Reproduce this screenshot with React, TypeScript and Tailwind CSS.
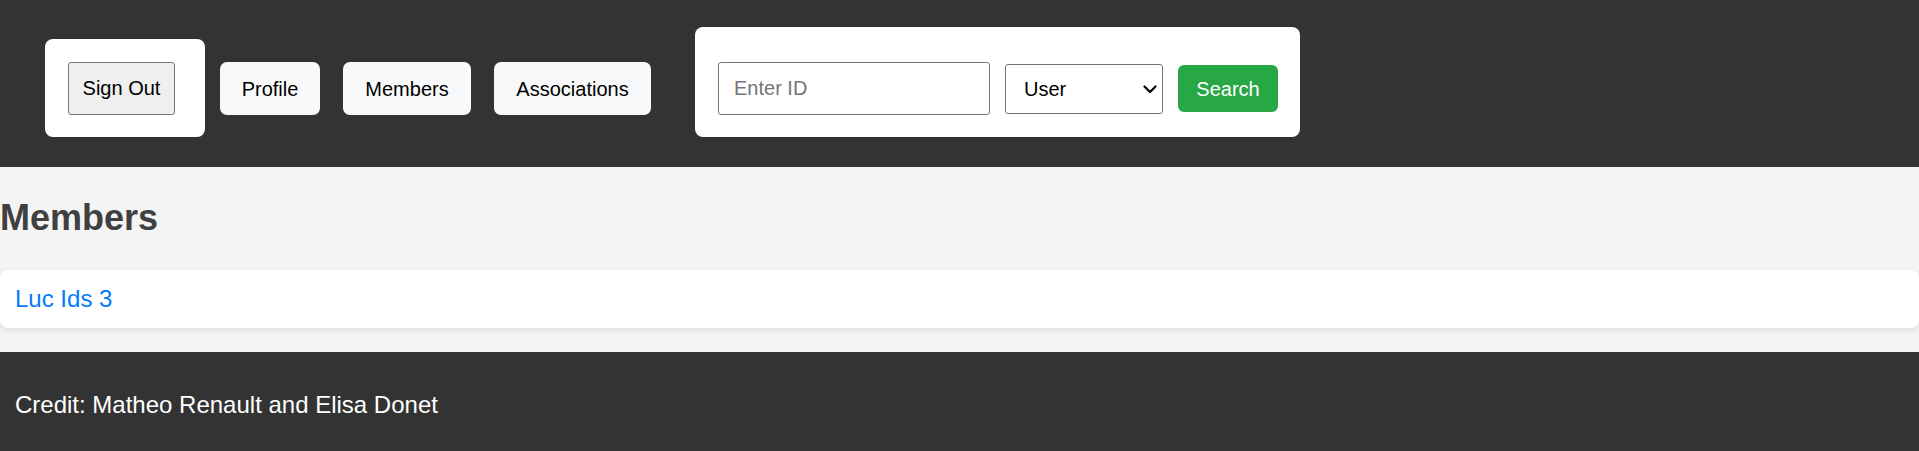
const navItems = [
  { label: 'Profile', width: 'w-[100px]' },
  { label: 'Members', width: 'w-[128px]' },
  { label: 'Associations', width: 'w-[157px]' },
];

function Header() {
  return (
    <header className="flex items-end bg-[#333333] pl-[45px] pt-[27px] pb-[30px]">
      {/* sign out card */}
      <div className="flex h-[98px] w-[160px] items-center rounded-[8px] bg-white pl-[23px]">
        <button
          type="button"
          className="h-[53px] w-[107px] rounded-[3px] border border-[#767676] bg-[#efefef] text-[20px] text-black"
        >
          Sign Out
        </button>
      </div>

      <nav className="mb-[22px] ml-[15px] flex gap-[23px]">
        {navItems.map((item) => (
          <button
            key={item.label}
            type="button"
            className={`${item.width} h-[53px] rounded-[7px] bg-[#f8f9fa] text-[20px] text-black`}
          >
            {item.label}
          </button>
        ))}
      </nav>

      {/* search card */}
      <form
        className="ml-[44px] flex h-[110px] w-[605px] items-center gap-[15px] rounded-[8px] bg-white pl-[23px] pt-[13px]"
        onSubmit={(e) => e.preventDefault()}
      >
        <input
          type="text"
          placeholder="Enter ID"
          className="h-[53px] w-[272px] rounded-[3px] border border-[#767676] px-[15px] text-[20px] text-black outline-none placeholder:text-[#757575]"
        />
        <div className="relative h-[50px] w-[158px]">
          <select className="h-full w-full appearance-none rounded-[3px] border border-[#767676] bg-white pl-[18px] text-[20px] text-black outline-none">
            <option>User</option>
            <option>Association</option>
          </select>
          <svg
            className="pointer-events-none absolute right-[6px] top-[21px]"
            width="14"
            height="9"
            viewBox="0 0 14 9"
            fill="none"
          >
            <path d="M1.5 1.5 7 7l5.5-5.5" stroke="#000" strokeWidth="2.2" strokeLinecap="round" strokeLinejoin="round" />
          </svg>
        </div>
        <button
          type="submit"
          className="h-[47px] w-[100px] rounded-[6px] bg-[#28a745] text-[20px] text-white"
        >
          Search
        </button>
      </form>
    </header>
  );
}

export default function App() {
  return (
    <div className="min-h-screen bg-[#f4f4f4] font-['Liberation_Sans',Arial,sans-serif]">
      <Header />

      <main>
        <h2 className="pt-[30px] text-[36px] font-bold leading-[41px] text-[#404040]">Members</h2>
        <ul className="mt-[32px]">
          <li className="flex h-[58px] items-center rounded-[8px] bg-white pl-[15px] shadow-[0_2px_6px_rgba(0,0,0,0.1)]">
            <a href="#" className="text-[24px] text-[#007bff]">
              Luc Ids 3
            </a>
          </li>
        </ul>
      </main>

      <footer className="mt-[24px] bg-[#333333] px-[15px] pt-[35px] pb-[40px] text-[24px] text-white">
        <p>Credit: Matheo Renault and Elisa Donet</p>
      </footer>
    </div>
  );
}
